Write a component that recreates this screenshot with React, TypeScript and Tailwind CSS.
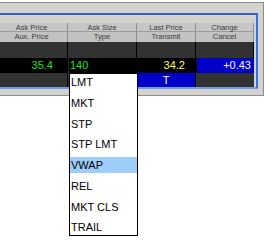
import React from 'react';

const cols = [
  { top: 'Ask Price', bottom: 'Aux. Price', w: 'w-[72px]' },
  { top: 'Ask Size', bottom: 'Type', w: 'w-[69px]' },
  { top: 'Last Price', bottom: 'Transmit', w: 'w-[59px]' },
  { top: 'Change', bottom: 'Cancel', w: 'w-[58px]' },
];

const orderTypes = ['LMT', 'MKT', 'STP', 'STP LMT', 'VWAP', 'REL', 'MKT CLS', 'TRAIL'];

const App: React.FC = () => {
  return (
    <div className="relative w-[265px] h-[240px] overflow-hidden bg-white font-['Liberation_Sans',Arial,sans-serif]">
      {/* order panel, cut off at the left edge */}
      <div className="mt-[2px] -ml-[10px] w-[274px] h-[94px] bg-[#d4d2cc] border border-[#8c8c8c] pt-[10px]">
        <div className="pl-[5px] w-[267px] border-t-2 border-r-2 border-b-2 border-t-[#2f62c8] border-r-[#3a6fd6] border-b-[#6f9ee6] pt-[8px] pr-[2px]">
          {/* header rows */}
          <div className="flex h-[9px] text-[7.5px] leading-[9px] text-[#3a3a3a]">
            {cols.map((c) => (
              <div key={c.top} className={`${c.w} bg-[#c6c6c6] border-r border-[#8e8e8e] border-b border-b-[#9a9a9a] text-center`}>
                {c.top}
              </div>
            ))}
          </div>
          <div className="flex h-[10px] text-[7.5px] leading-[10px] text-[#3a3a3a]">
            {cols.map((c) => (
              <div key={c.bottom} className={`${c.w} bg-[#c2c2c2] border-r border-[#8e8e8e] text-center`}>
                {c.bottom}
              </div>
            ))}
          </div>

          {/* data rows */}
          <div className="flex h-[16px]">
            {cols.map((c) => (
              <div key={c.top} className={`${c.w} bg-[#323232] border-r border-black`} />
            ))}
          </div>
          <div className="flex h-[15px] bg-black text-[11px] leading-[15px]">
            <div className="w-[72px] text-right pr-[15px] text-[#22e022]">35.4</div>
            <div className="w-[69px] pl-[1px] text-[#22e022] border-l border-[#222]">140</div>
            <div className="w-[59px] text-right pr-[11px] text-[#ffff40]">34.2</div>
            <div className="w-[58px] text-right pr-[3px] text-white bg-[#0000c8] border-l border-black">+0.43</div>
          </div>
          <div className="flex h-[14px] text-[11px] leading-[14px]">
            <div className="w-[72px] bg-[#323232] border-r border-black" />
            <div className="w-[69px] bg-[#323232] border-r border-black" />
            <div className="w-[59px] bg-[#0000c8] border-r border-black text-center text-white">T</div>
            <div className="w-[58px] bg-[#323232]" />
          </div>
        </div>
      </div>

      {/* order type dropdown */}
      <div className="absolute left-[69px] top-[73px] w-[69px] h-[163px] bg-white border border-black flex flex-col gap-[4.75px]">
        {orderTypes.map((t) => (
          <div
            key={t}
            className={`h-[16px] shrink-0 pl-[1px] text-[11px] leading-[16px] text-black ${t === 'VWAP' ? 'bg-[#9fcdfb]' : ''}`}
          >
            {t}
          </div>
        ))}
      </div>
    </div>
  );
};

export default App;
